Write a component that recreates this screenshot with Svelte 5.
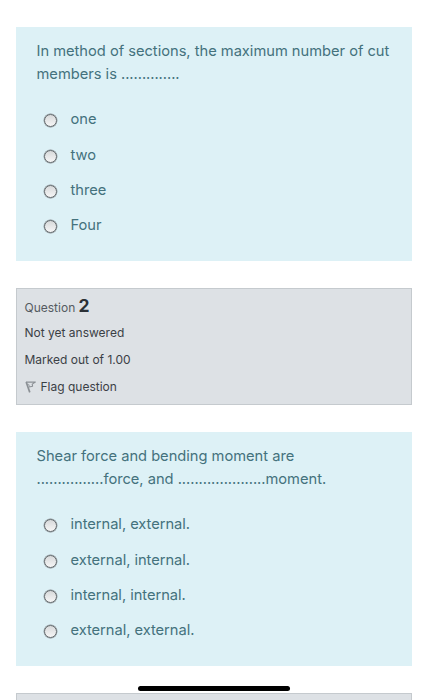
<script>
  const first = {
    lines: [['In method of sections, the maximum number of cut'], ['members is ', '..............']],
    options: ['one', 'two', 'three', 'Four']
  };
  const second = {
    lines: [
      ['Shear force and bending moment are'],
      ['', '................', 'force, and ', '.....................', 'moment.']
    ],
    options: ['internal, external.', 'external, internal.', 'internal, internal.', 'external, external.']
  };
</script>

{#snippet question(q, name)}
  <section class="question">
    <div class="prompt">
      {#each q.lines as line}
        <div class="line">{#each line as part, i}<span class:dots={i % 2 === 1}>{part}</span>{/each}</div>
      {/each}
    </div>
    <div class="options">
      {#each q.options as option}
        <label><input type="radio" {name} /><span>{option}</span></label>
      {/each}
    </div>
  </section>
{/snippet}

<main>
  {@render question(first, 'q1')}
  <aside class="info">
    <div class="number">Question <b>2</b></div>
    <div class="row">Not yet answered</div>
    <div class="row">Marked out of 1.00</div>
    <div class="row flag">
      <svg width="12" height="13" viewBox="0 0 12 13" fill="none" stroke="#8b9095" stroke-linejoin="round">
        <path d="M1.2 2 4.8 12.4" stroke-width="1.7" />
        <path d="M1 2.1H10.4L7.2 4.1 7.6 6.2 4 7" stroke-width="1.1" />
        <path d="M3.4 3.9 4.6 6.6" stroke-width=".8" />
      </svg>
      <span>Flag question</span>
    </div>
  </aside>
  {@render question(second, 'q2')}
  <aside class="info next"></aside>
  <div class="home"></div>
</main>

<style>
  main {
    position: relative;
    box-sizing: border-box;
    width: 427px;
    height: 700px;
    padding: 27px 15px 0 16px;
    overflow: hidden;
    background: #fff;
    font-family: Inter, 'Liberation Sans', sans-serif;
  }
  .question {
    box-sizing: border-box;
    height: 233.7px;
    padding: 13px 20px 0 20.5px;
    background: #ddf1f6;
    color: #44727d;
    font-size: 14.7px;
  }
  .line {
    height: 23px;
    line-height: 23px;
    white-space: pre;
    letter-spacing: -0.02px;
  }
  .dots {
    letter-spacing: -0.05px;
  }
  .options {
    padding: 16.3px 0 0 7.5px;
    letter-spacing: -0.04px;
  }
  label {
    display: flex;
    align-items: center;
    height: 35.2px;
    line-height: 35px;
  }
  input {
    appearance: none;
    box-sizing: border-box;
    flex: none;
    width: 13px;
    height: 13px;
    margin: 2px 13.5px 0 0;
    border: 1px solid #62686b;
    border-radius: 50%;
    background: linear-gradient(#d7d9da, #f6f6f6);
    box-shadow: 0 0 0 0.4px #858b8e;
  }
  .info {
    box-sizing: border-box;
    height: 117px;
    margin: 27.3px 0 27px;
    padding: 3px 7.5px;
    border: 1px solid #c5cace;
    background: #dde1e5;
    color: #3b4045;
    font-size: 12px;
    letter-spacing: 0;
  }
  .number {
    height: 27px;
    line-height: 28px;
    color: #555b61;
  }
  b {
    color: #2b3036;
    font-size: 17.5px;
  }
  .row {
    height: 27px;
    line-height: 27px;
  }
  .flag {
    display: flex;
    align-items: center;
    gap: 4px;
  }
  .next {
    margin-bottom: 0;
  }
  .home {
    position: absolute;
    left: 138px;
    top: 686px;
    width: 152px;
    height: 5px;
    border-radius: 3px;
    background: #000;
  }
</style>
